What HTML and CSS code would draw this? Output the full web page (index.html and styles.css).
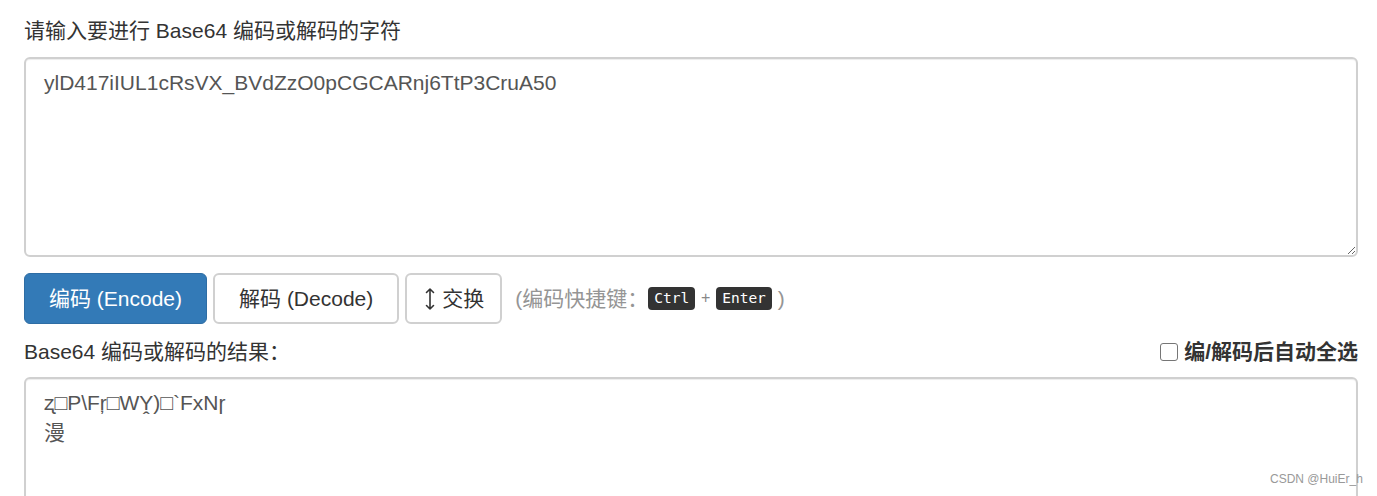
FILE: index.html
```html
<!DOCTYPE html>
<html lang="zh-CN">
<head>
<meta charset="utf-8">
<title>Base64 编码/解码</title>
<link rel="stylesheet" href="styles.css">
</head>
<body>
<div class="page">
  <label class="field-label" for="src">请输入要进行 Base64 编码或解码的字符</label>
  <textarea id="src" class="box box-src">ylD417iIUL1cRsVX_BVdZzO0pCGCARnj6TtP3CruA50</textarea>

  <div class="actions">
    <button class="btn btn-primary btn-wide">编码 (Encode)</button>
    <button class="btn btn-default btn-wide">解码 (Decode)</button>
    <button class="btn btn-default btn-swap"><svg class="arrow" width="10" height="24" viewBox="0 0 10 24" aria-hidden="true"><path d="M5 2 V22 M1.5 5.5 L5 2 L8.5 5.5 M1.5 18.5 L5 22 L8.5 18.5" fill="none" stroke="#333" stroke-width="1.6" stroke-linecap="round" stroke-linejoin="round"/></svg>交换</button>
    <span class="hint">(编码快捷键：<kbd>Ctrl</kbd> <span class="plus">+</span> <kbd>Enter</kbd> )</span>
  </div>

  <div class="result-head">
    <span class="field-label">Base64 编码或解码的结果：</span>
    <label class="auto-select"><input type="checkbox" class="check"> 编/解码后自动全选</label>
  </div>
  <textarea class="box box-out">ʐ□P\Fŗ□WY̭)□`FxNɼ
漫</textarea>
</div>
<div class="watermark">CSDN @HuiEr_h</div>
</body>
</html>
```

FILE: styles.css
```css
html, body {
  margin: 0;
  padding: 0;
  background: #fff;
  overflow: hidden;
}

body {
  font-family: "Liberation Sans", "Noto Sans CJK SC", sans-serif;
  font-size: 21px;
  color: #333;
}

.page {
  padding: 16px 19px 0 24px;
}

.field-label {
  display: block;
  line-height: 30px;
  font-weight: normal;
  margin-bottom: 11px;
}

.box {
  display: block;
  box-sizing: border-box;
  width: 100%;
  height: 200px;
  margin: 0;
  padding: 9px 18px;
  border: 2px solid #d0d0d0;
  border-radius: 6px;
  box-shadow: inset 0 1px 1px rgba(0, 0, 0, 0.075);
  font-family: "Liberation Sans", "Noto Sans CJK SC", sans-serif;
  font-size: 21px;
  line-height: 30px;
  color: #555;
  background: #fff;
  resize: vertical;
  outline: none;
}

.box-src {
  margin-bottom: 16px;
}

.actions {
  display: flex;
  align-items: center;
  gap: 6px;
  height: 51px;
  margin-bottom: 13px;
}

.btn {
  box-sizing: border-box;
  height: 51px;
  margin: 0;
  border-radius: 6px;
  font-family: "Liberation Sans", "Noto Sans CJK SC", sans-serif;
  font-size: 21px;
  line-height: 30px;
  cursor: pointer;
}

.btn-wide {
  padding: 0 24px;
}

.btn-swap {
  display: flex;
  align-items: center;
  padding: 0 16px 0 18px;
}

.btn-primary {
  background: #337ab7;
  border: 1.5px solid #2e6da4;
  color: #fff;
}

.btn-default {
  background: #fff;
  border: 2px solid #d0d0d0;
  color: #333;
}

.arrow {
  display: block;
  margin-right: 7px;
}

.hint {
  margin-left: 7px;
  margin-top: -3px;
  color: #959595;
  white-space: pre;
}

kbd {
  display: inline-block;
  padding: 1px 6px;
  font-family: "DejaVu Sans Mono", monospace;
  font-size: 14.5px;
  line-height: 21px;
  color: #fff;
  background: #333;
  border-radius: 4px;
  vertical-align: 3px;
}

.plus {
  font-size: 16px;
  color: #888;
  vertical-align: 3px;
}

.result-head {
  display: flex;
  justify-content: space-between;
  align-items: center;
  height: 30px;
  margin-bottom: 10px;
}

.result-head .field-label {
  margin-bottom: 0;
}

.auto-select {
  display: flex;
  align-items: center;
  gap: 6px;
  font-weight: bold;
  line-height: 30px;
}

.check {
  appearance: none;
  -webkit-appearance: none;
  width: 18px;
  height: 18px;
  margin: 0;
  border: 1px solid #767676;
  border-radius: 3px;
  background: #fff;
}

.watermark {
  position: absolute;
  left: 1270px;
  top: 472px;
  font-family: "Liberation Sans", sans-serif;
  font-size: 12px;
  color: #999;
}
```
